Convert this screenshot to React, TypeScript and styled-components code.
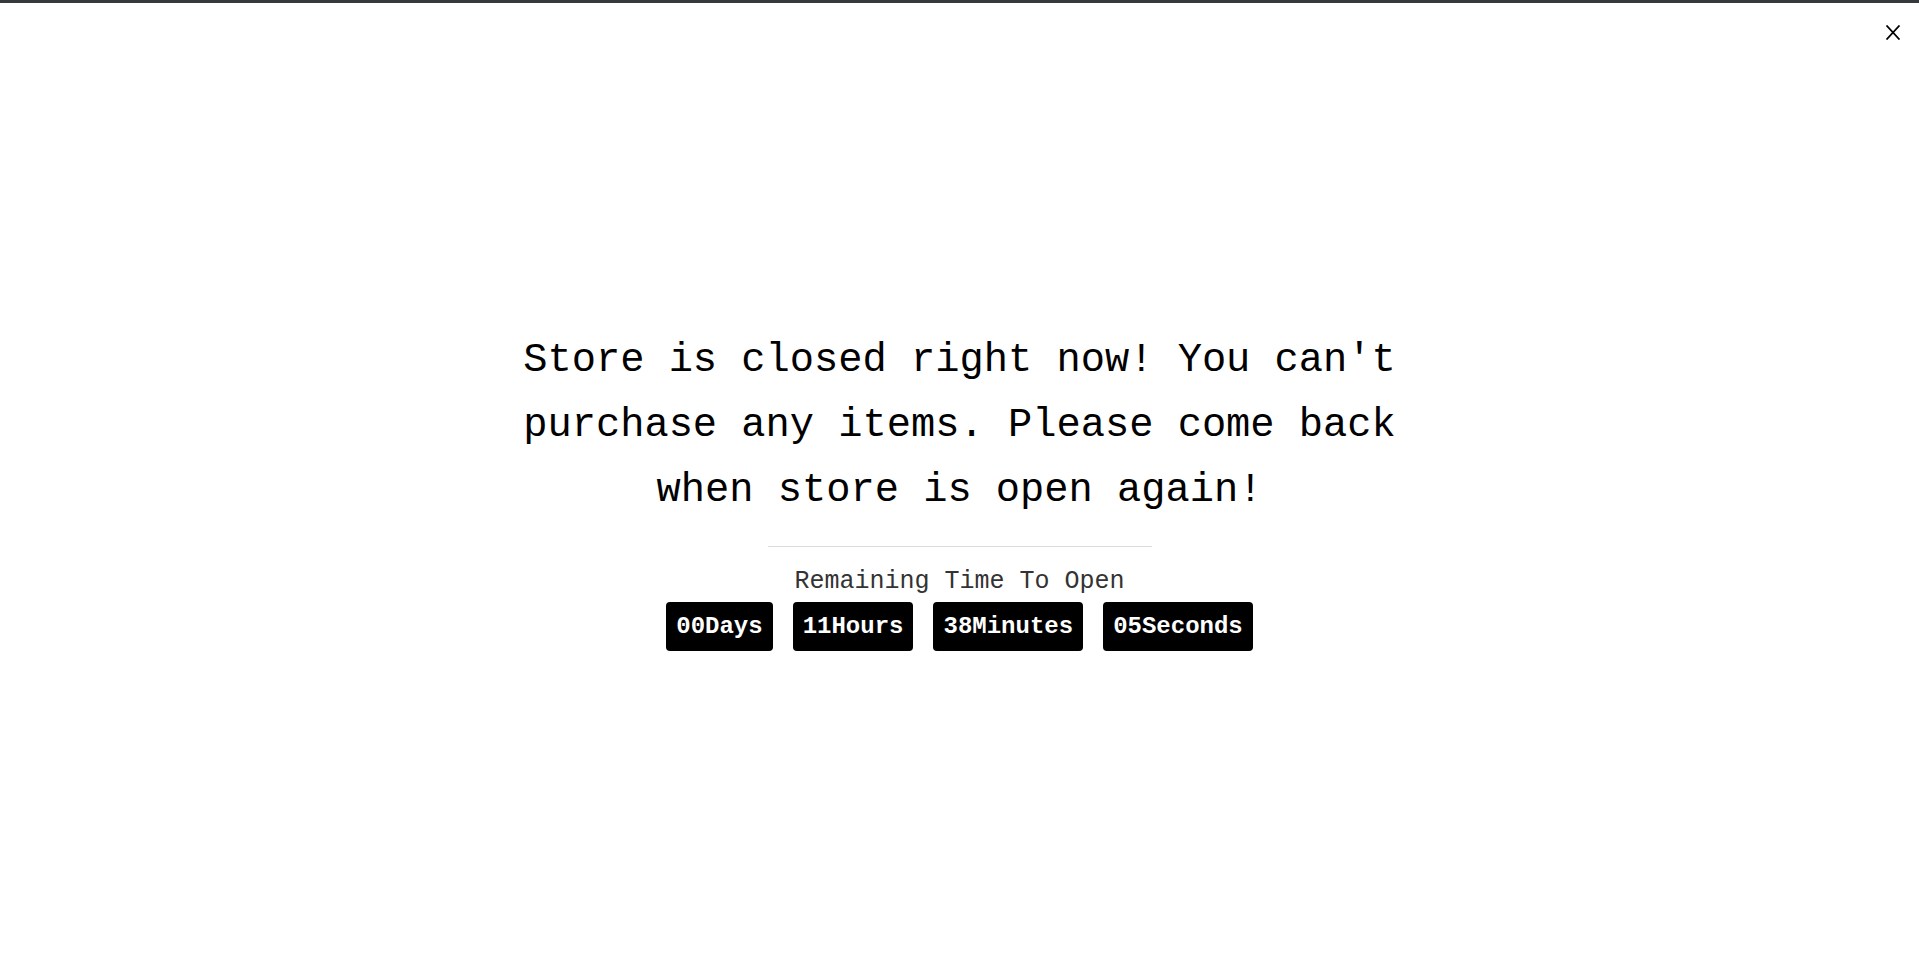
import { createGlobalStyle, styled } from "styled-components";

const GlobalStyle = createGlobalStyle`
    html, body {
        margin: 0;
        padding: 0;
        background: #fff;
    }
    body {
        font-family: "Liberation Mono", "Courier New", monospace;
        color: #000;
    }
`;

const Page = styled.div`
    position: relative;
    display: flex;
    flex-direction: column;
    align-items: center;
    justify-content: center;
    box-sizing: border-box;
    min-height: 100vh;
    padding-top: 4px;
    border-top: 3px solid #35393d;
`;

const CloseButton = styled.button`
    position: absolute;
    top: 18px;
    right: 15px;
    display: flex;
    align-items: center;
    justify-content: center;
    width: 22px;
    height: 22px;
    padding: 0;
    border: none;
    background: none;
    cursor: pointer;
`;

const Message = styled.h1`
    max-width: 900px;
    margin: 0;
    font-size: 40.4px;
    font-weight: 400;
    line-height: 65px;
    text-align: center;
`;

const Divider = styled.hr`
    width: 384px;
    margin: 23px 0 0;
    border: none;
    border-top: 1px solid #dcdcdc;
`;

const RemainingLabel = styled.p`
    margin: 21px 0 0;
    color: #333;
    font-size: 25px;
    line-height: 28px;
`;

const CountdownRow = styled.div`
    display: flex;
    gap: 20px;
    margin-top: 6px;
`;

const TimeBox = styled.span`
    padding: 11px 10px;
    border-radius: 4px;
    background-color: #000;
    color: #fff;
    font-size: 24px;
    font-weight: 700;
    line-height: 27px;
`;

const countdown = [
    { value: "00", unit: "Days" },
    { value: "11", unit: "Hours" },
    { value: "38", unit: "Minutes" },
    { value: "05", unit: "Seconds" },
];

function App() {
    return (
        <>
            <GlobalStyle />
            <Page>
                <CloseButton aria-label="Close">
                    <svg width="16" height="15" viewBox="0 0 16 15">
                        <path d="M1.5 0.5 L14.5 14.5 M14.5 0.5 L1.5 14.5" stroke="#000" strokeWidth="1.8" />
                    </svg>
                </CloseButton>
                <Message>
                    Store is closed right now! You can't purchase any items. Please come back when store is open
                    again!
                </Message>
                <Divider />
                <RemainingLabel>Remaining Time To Open</RemainingLabel>
                <CountdownRow>
                    {countdown.map((item) => (
                        <TimeBox key={item.unit}>
                            {item.value}
                            {item.unit}
                        </TimeBox>
                    ))}
                </CountdownRow>
            </Page>
        </>
    );
}

export default App;
